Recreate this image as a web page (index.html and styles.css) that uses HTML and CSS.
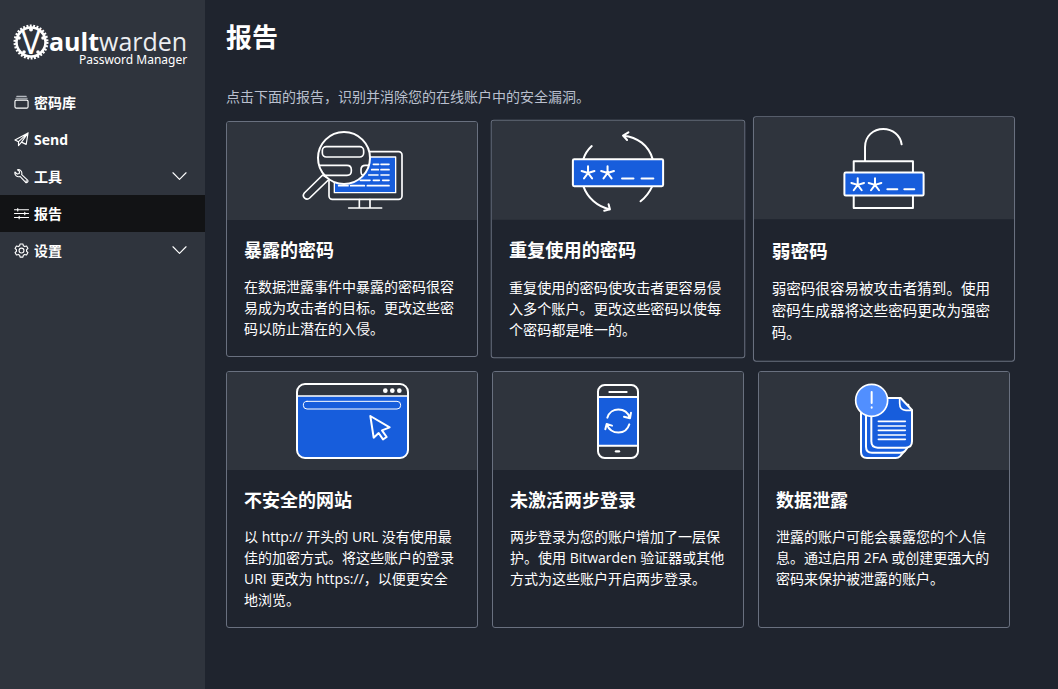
FILE: index.html
```html
<!DOCTYPE html>
<html lang="zh-CN">
<head>
<meta charset="utf-8">
<title>报告 | Vaultwarden</title>
<meta name="viewport" content="width=device-width, initial-scale=1">
<link rel="stylesheet" href="styles.css">
</head>
<body>
<svg class="defs" aria-hidden="true">
  <defs>
    <g id="star"><path d="M0 0V-20M0 0L19 -6M0 0L12 16M0 0L-12 16M0 0L-19 -6"/></g>
  </defs>
</svg>
<div class="app">
  <aside class="sidebar">
    <a class="logo" href="#">
      <svg class="logo-mark" viewBox="0 0 36 36" aria-hidden="true">
        <circle cx="18" cy="18" r="14.500" fill="none" stroke="#fff" stroke-width="2.500"/>
        <circle cx="18" cy="18" r="16.200" fill="none" stroke="#fff" stroke-width="2.600" stroke-dasharray="1.900 1.493"/>
        <g fill="#fff"><circle cx="18" cy="5.500" r="2"/><circle cx="6" cy="14" r="1.800"/><circle cx="30" cy="14" r="1.800"/><circle cx="11" cy="28" r="1.800"/><circle cx="25" cy="28" r="1.800"/></g>
        <text class="logo-v" x="18" y="30" text-anchor="middle">V</text>
      </svg>
      <span class="logo-text">
        <span class="logo-name"><b>ault</b>warden</span>
        <span class="logo-sub">Password Manager</span>
      </span>
    </a>
    <nav class="nav">
      <a class="nav-item" href="#">
        <svg class="icon" viewBox="0 0 16 16"><path class="faint" d="M3 1.500h10M2 3.500h12"/><rect x="1" y="5.500" width="14" height="8.500" rx="1.500"/></svg>
        <span>密码库</span>
      </a>
      <a class="nav-item" href="#">
        <svg class="icon" viewBox="0 0 16 16"><path d="M15 1L1 8.500l3.800 1.800L15 1l-2 12.200-5-2.400M4.800 10.300v4.200L8 10.800 15 1 8 10.800"/></svg>
        <span>Send</span>
      </a>
      <button class="nav-item" type="button">
        <svg class="icon" viewBox="0 0 16 16"><path d="M1 3.200l2.500 2.200 2-.6.5-2L3.700.900C6 .200 8.600 1.800 8.400 5l-.2 1 6.300 5.800c1.300 1.500-.8 3.700-2.300 2.300L6.400 7.900C3.500 9 .300 6.800 1 3.200z"/><circle cx="13" cy="13" r=".3"/></svg>
        <span>工具</span>
        <svg class="chevron" viewBox="0 0 16 16"><path d="M1 4l7 7 7-7"/></svg>
      </button>
      <a class="nav-item active" href="#" aria-current="page">
        <svg class="icon" viewBox="0 0 16 16"><path d="M.500 4h15M.500 8h15M.500 12.200h15M4 2.700v2.600M11.500 6.700v2.600M5.500 11v2.500"/></svg>
        <span>报告</span>
      </a>
      <button class="nav-item" type="button">
        <svg class="icon" viewBox="0 0 16 16"><circle cx="8" cy="8" r="2.600"/><path d="M6.500 1h3l.5 2 1.400.8 2-.6 1.500 2.600L13.400 7.200v1.600l1.500 1.400-1.500 2.600-2-.6L10 13l-.5 2h-3L6 13l-1.400-.8-2 .6-1.500-2.600 1.500-1.400V7.200L1.100 5.800l1.500-2.600 2 .6L6 3z"/></svg>
        <span>设置</span>
        <svg class="chevron" viewBox="0 0 16 16"><path d="M1 4l7 7 7-7"/></svg>
      </button>
    </nav>
  </aside>

  <main class="main">
    <h1 class="page-title">报告</h1>
    <p class="intro">点击下面的报告，识别并消除您的在线账户中的安全漏洞。</p>
    <div class="grid">
      <a class="card" href="#">
        <div class="card-head">
          <svg class="art" width="100" height="80" viewBox="36 48 300 240">
            <rect x="117" y="110" width="219" height="143" rx="10" stroke-width="5"/>
            <rect x="133" y="126" width="184" height="107" class="blue" stroke-width="4"/>
            <path stroke-width="5" d="M250 148h16M273 148h24M245 164h20M273 164h24M236 180h28M273 180h24M211 196h29M250 196h18M278 196h19M146 212h28M182 212h41M232 212h65"/>
            <path stroke-width="5" d="M208 254v24M240 254v24M176 279h99"/>
            <path class="dark" stroke-width="5" d="M98 180L43 234c-9 12 6 24 16 15L118 192z"/>
            <circle class="dark" cx="162" cy="129" r="78" stroke-width="6"/>
            <rect x="97" y="95" width="124" height="31" rx="12" stroke-width="5"/>
            <path stroke-width="5" d="M88 151h83q13 0 13 13v4q0 13-13 13h-69M236 151h-10q-13 0-13 13v4q0 13 7 13"/>
          </svg>
        </div>
        <div class="card-body">
          <h2 class="card-title">暴露的密码</h2>
          <p class="card-text">在数据泄露事件中暴露的密码很容易成为攻击者的目标。更改这些密码以防止潜在的入侵。</p>
        </div>
      </a>

      <a class="card settling" href="#">
        <div class="card-head">
          <svg class="art" width="90" height="80" viewBox="54 47 270 240">
            <path stroke-width="6" d="M86 134Q93 112 111 95M292 134C280 92 246 68 205 64M220 54L204 64L216 77M86 214C98 248 127 275 165 283M148 287L165 283L161 268M291 214Q278 242 256 259"/>
            <rect class="blue" x="55" y="134" width="268" height="80" rx="4" stroke-width="6"/>
            <use href="#star" x="100" y="175" stroke-width="6"/>
            <use href="#star" x="158" y="175" stroke-width="6"/>
            <path stroke-width="6" d="M201 191h34M259 191h35"/>
          </svg>
        </div>
        <div class="card-body">
          <h2 class="card-title">重复使用的密码</h2>
          <p class="card-text">重复使用的密码使攻击者更容易侵入多个账户。更改这些密码以使每个密码都是唯一的。</p>
        </div>
      </a>

      <a class="card raised" href="#">
        <div class="card-head">
          <svg class="art" width="80" height="80" viewBox="52 34 250 250">
            <path stroke-width="6" d="M120 137V95C120 62 145 41 175 41C203 41 226 60 230 87"/>
            <rect x="86" y="138" width="178" height="140" stroke-width="6"/>
            <rect class="blue" x="58" y="172" width="238" height="69" rx="4" stroke-width="6"/>
            <use href="#star" x="98" y="209" stroke-width="6"/>
            <use href="#star" x="150" y="209" stroke-width="6"/>
            <path stroke-width="6" d="M187 222h30M238 222h30"/>
          </svg>
        </div>
        <div class="card-body">
          <h2 class="card-title">弱密码</h2>
          <p class="card-text">弱密码很容易被攻击者猜到。使用密码生成器将这些密码更改为强密码。</p>
        </div>
      </a>

      <a class="card" href="#">
        <div class="card-head">
          <svg class="art" width="112" height="76" viewBox="48 45 336 228">
            <path class="fill-blue" d="M51 84h333v162q0 24-24 24H75q-24 0-24-24z"/>
            <rect x="51" y="48" width="333" height="222" rx="24" stroke-width="6"/>
            <path stroke-width="5" d="M51 84h333"/>
            <g class="dots"><circle cx="316" cy="68" r="7"/><circle cx="337" cy="68" r="7"/><circle cx="358" cy="68" r="7"/></g>
            <rect x="70" y="100" width="292" height="23" rx="11" stroke-width="3"/>
            <path stroke-width="6" d="M271 144L329 178L306 187L320 207L309 214L296 195L281 209Z"/>
          </svg>
        </div>
        <div class="card-body">
          <h2 class="card-title">不安全的网站</h2>
          <p class="card-text">以 http:// 开头的 URL 没有使用最佳的加密方式。将这些账户的登录 URI 更改为 https://，以便更安全地浏览。</p>
        </div>
      </a>

      <a class="card" href="#">
        <div class="card-head">
          <svg class="art" width="42" height="76" viewBox="81 45 126 228">
            <path class="fill-blue" d="M84 87h120v146H84z"/>
            <rect x="84" y="51" width="120" height="219" rx="20" stroke-width="6"/>
            <path stroke-width="6" d="M84 87h120M84 233h120M118 72h52"/>
            <path stroke-width="7" d="M138 250h9"/>
            <path stroke-width="6" d="M112 149C122 116 168 116 180 150M162 146L180 151L183 134M178 169C168 202 124 202 110 169M106 184L110 168L126 173"/>
          </svg>
        </div>
        <div class="card-body">
          <h2 class="card-title">未激活两步登录</h2>
          <p class="card-text">两步登录为您的账户增加了一层保护。使用 Bitwarden 验证器或其他方式为这些账户开启两步登录。</p>
        </div>
      </a>

      <a class="card" href="#">
        <div class="card-head">
          <svg class="art" width="60" height="76" viewBox="57 45 180 228">
            <path class="blue" stroke-width="6" d="M78 120v132q0 18 18 18h86q8 0 13-5l12-14V120z"/>
            <path class="blue" stroke-width="6" d="M93 110v126q0 18 18 18h86q8 0 13-5l10-14V110z"/>
            <path class="blue" stroke-width="6" d="M109 90H197L231 126V220q0 19-19 19H128q-19 0-19-19z"/>
            <path stroke-width="5" d="M194 91v15q0 21 19 21h17"/>
            <path stroke-width="5" d="M130 160h81M130 174h81M130 187h81M130 201h81M130 214h81"/>
            <circle class="sky" cx="110" cy="97" r="48" stroke-width="5"/>
            <path stroke-width="6" d="M110 72v33M110 118v1"/>
          </svg>
        </div>
        <div class="card-body">
          <h2 class="card-title">数据泄露</h2>
          <p class="card-text">泄露的账户可能会暴露您的个人信息。通过启用 2FA 或创建更强大的密码来保护被泄露的账户。</p>
        </div>
      </a>
    </div>
  </main>
</div>
</body>
</html>
```
FILE: styles.css
```css
* {
  box-sizing: border-box;
}

body {
  margin: 0;
  background: #1f242e;
  color: #fff;
  font-family: "Open Sans", "Noto Sans CJK SC", sans-serif;
  font-size: 14px;
  line-height: 21px;
}

a {
  color: inherit;
  text-decoration: none;
}

h1,
h2,
p {
  margin: 0;
}

.defs {
  position: absolute;
  width: 0;
  height: 0;
}

.app {
  display: flex;
  min-height: 100vh;
}

/* Sidebar */

.sidebar {
  flex: none;
  width: 205px;
  background: #2f343d;
}

.logo {
  display: flex;
  align-items: flex-start;
  height: 84px;
  padding: 24px 0 0 13px;
}

.logo-mark {
  flex: none;
  width: 36px;
  height: 36px;
  overflow: visible;
}

.logo-v {
  fill: #fff;
  font-family: "Open Sans", sans-serif;
  font-size: 34px;
  font-weight: 400;
}

.logo-text {
  display: flex;
  flex-direction: column;
  align-items: flex-end;
  padding-top: 5px;
}

.logo-name {
  color: #eceef1;
  font-size: 25px;
  font-weight: 400;
  line-height: 24px;
}

.logo-name b {
  color: #fff;
  font-weight: 700;
}

.logo-sub {
  font-family: "Noto Sans", "Open Sans", sans-serif;
  font-size: 12px;
  line-height: 13px;
}

.nav {
  display: flex;
  flex-direction: column;
}

.nav-item {
  display: flex;
  align-items: center;
  gap: 5px;
  width: 100%;
  height: 37px;
  padding: 0 18px 0 14px;
  border: 0;
  background: none;
  color: #fff;
  font: inherit;
  font-weight: 700;
  cursor: pointer;
}

.nav-item.active {
  background: #121315;
}

.icon,
.chevron {
  flex: none;
  width: 15px;
  height: 15px;
  fill: none;
  stroke: #fff;
  stroke-width: 1.2;
  stroke-linejoin: round;
  stroke-linecap: round;
}

.icon .faint {
  stroke: #b4b8bf;
}

.chevron {
  margin-left: auto;
}

/* Reports */

.main {
  flex: 1;
  min-width: 0;
  padding: 19px 48px 20px 21px;
}

.page-title {
  font-size: 26px;
  font-weight: 700;
  line-height: 36px;
}

.intro {
  margin: 31px 0 14px;
  color: #bac0ce;
}

.grid {
  display: grid;
  grid-template-columns: repeat(3, 1fr);
  gap: 14px;
}

.card {
  display: flex;
  flex-direction: column;
  overflow: hidden;
  border: 1px solid #69707f;
  border-radius: 3px;
  background: #1f242e;
}

/* Hover lift, and the card still easing back after the pointer left it */
.card.raised {
  transform: scale(1.04);
}

.card.settling {
  transform: scale(1.01);
}

.card-head {
  display: flex;
  align-items: center;
  justify-content: center;
  height: 98px;
  background: #2f343d;
}

.card-body {
  padding: 17px;
}

.card-title {
  margin-bottom: 13px;
  font-size: 18px;
  font-weight: 700;
  line-height: 26px;
}

.art {
  overflow: visible;
  fill: none;
  stroke: #fff;
  stroke-linecap: round;
  stroke-linejoin: round;
}

.art .blue {
  fill: #175ddc;
}

.art .fill-blue {
  fill: #175ddc;
  stroke: none;
}

.art .dark {
  fill: #2f343d;
}

.art .sky {
  fill: #518fff;
}

.art .dots {
  fill: #fff;
  stroke: none;
}
```
